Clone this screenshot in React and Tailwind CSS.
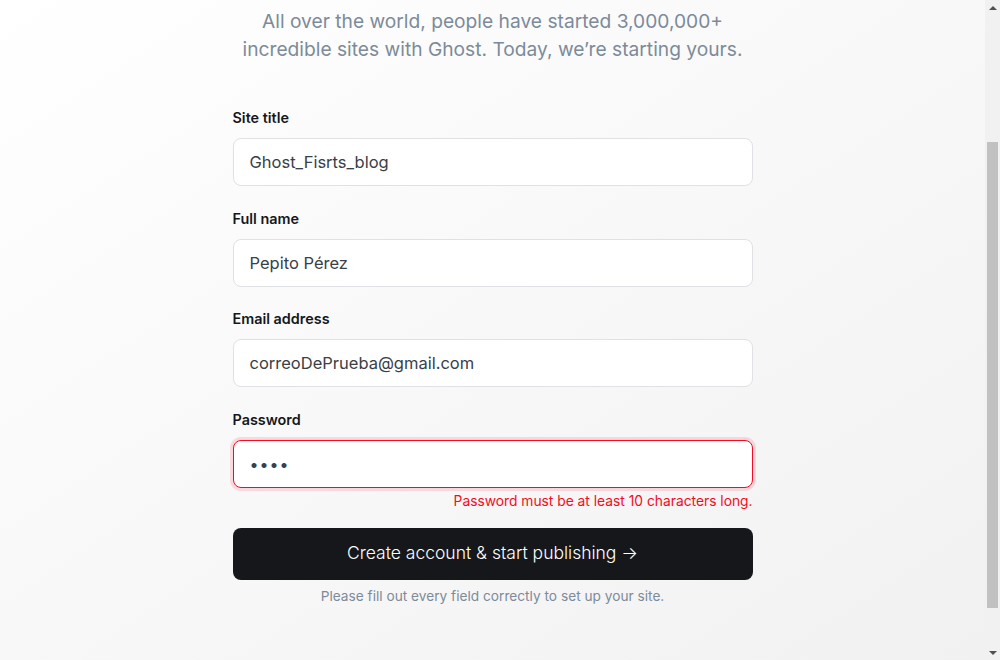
import React from "react";

function Field({ label, children }) {
  return (
    <div className="flex flex-col">
      <label className="text-[14.4px] leading-[20px] font-semibold text-[#15171a] mb-[10px]">{label}</label>
      {children}
    </div>
  );
}

export default function App() {
  const inputCls =
    "h-[48px] w-full rounded-lg border border-[#dfe1e5] bg-white px-4 text-[16.5px] text-[#394047] outline-none";
  return (
    <div
      className="flex h-[660px] w-[1000px] overflow-hidden bg-gradient-to-br from-white to-[#f1f1f1]"
      style={{ fontFamily: "Inter, 'Noto Sans', sans-serif" }}
    >
      <main className="flex-1 flex flex-col items-center">
        <div className="w-[520px] flex flex-col items-center">
          <p className="pt-[7px] whitespace-nowrap text-center text-[19.2px] leading-[28px] text-[#7c8b9a]">
            All over the world, people have started 3,000,000+
            <br />
            incredible sites with Ghost. Today, we’re starting yours.
          </p>

          <div className="mt-[45px] w-full flex flex-col gap-[22.5px]">
            <Field label="Site title">
              <input className={inputCls} readOnly value="Ghost_Fisrts_blog" />
            </Field>
            <Field label="Full name">
              <input className={inputCls} readOnly value="Pepito Pérez" />
            </Field>
            <Field label="Email address">
              <input className={inputCls} readOnly value="correoDePrueba@gmail.com" />
            </Field>
            <Field label="Password">
              <div className="h-[48px] w-full rounded-lg border border-[#f50b23] bg-white px-4 flex items-center shadow-[0_0_0_3px_rgba(245,11,35,0.13)]">
                <span className="text-[16px] tracking-[1px] text-[#394047]">••••</span>
              </div>
              <p className="mt-[3px] text-right text-[13.8px] leading-[20px] text-[#f50b23]">
                Password must be at least 10 characters long.
              </p>
            </Field>
          </div>

          <button className="mt-[17px] h-[52px] w-full rounded-lg bg-[#15171a] text-[17.5px] font-light text-white">
            Create account &amp; start publishing →
          </button>
          <p className="mt-[6px] w-full text-center text-[13.7px] leading-[20px] text-[#7c8b9a]">
            Please fill out every field correctly to set up your site.
          </p>
        </div>
      </main>

      <div className="w-[15px] h-full bg-[#f1f1f1] flex flex-col items-center">
        <div className="h-[15px] w-full flex items-center justify-center">
          <div className="w-0 h-0 border-l-[4px] border-r-[4px] border-b-[4px] border-l-transparent border-r-transparent border-b-[#505050]" />
        </div>
        <div className="mt-[127px] h-[466px] w-[11px] bg-[#c1c1c1]" />
        <div className="flex-1" />
        <div className="h-[15px] w-full flex items-center justify-center">
          <div className="w-0 h-0 border-l-[4px] border-r-[4px] border-t-[4px] border-l-transparent border-r-transparent border-t-[#505050]" />
        </div>
      </div>
    </div>
  );
}
